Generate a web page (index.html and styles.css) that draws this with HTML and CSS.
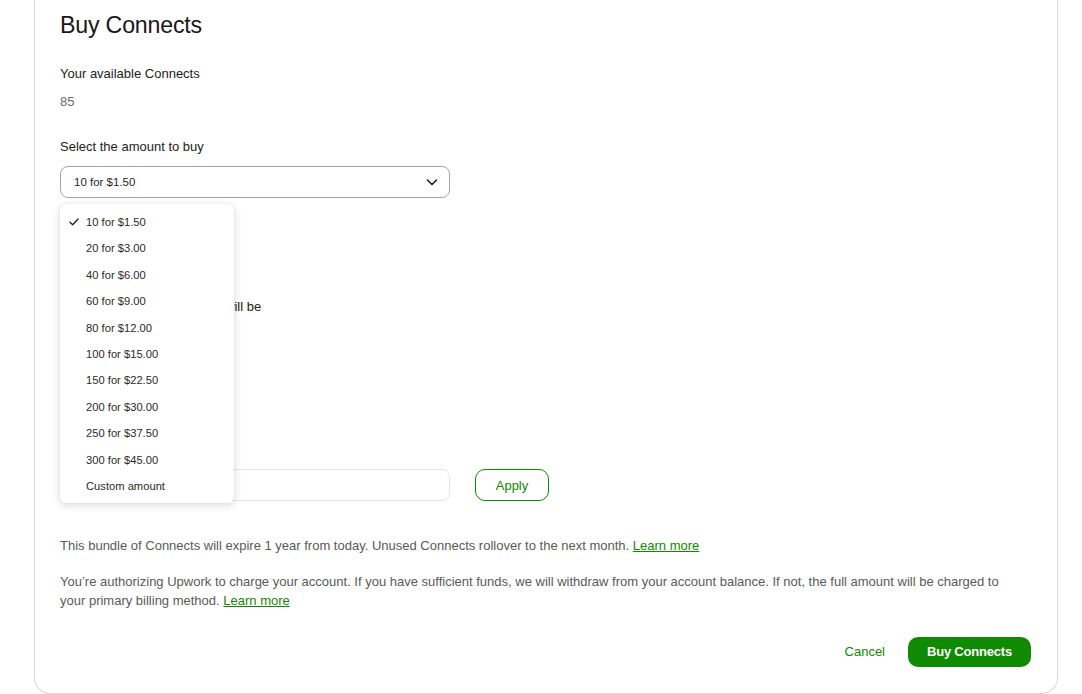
FILE: index.html
```html
<!DOCTYPE html>
<html lang="en">
<head>
<meta charset="utf-8">
<title>Buy Connects</title>
<link rel="stylesheet" href="styles.css">
</head>
<body>
<div class="card">
  <h1 class="title">Buy Connects</h1>
  <div class="label first">Your available Connects</div>
  <div class="value">85</div>
  <div class="label select-label">Select the amount to buy</div>
  <div class="select-wrap">
    <div class="select">
      <span>10 for $1.50</span>
      <svg class="chevron" width="14" height="14" viewBox="0 0 14 14"><path d="M2.5 5 L7 9.5 L11.5 5" fill="none" stroke="#1f1f1f" stroke-width="1.6" stroke-linecap="round" stroke-linejoin="round"/></svg>
    </div>
    <ul class="menu">
      <li class="selected"><svg class="check" width="10" height="10" viewBox="0 0 10 10"><path d="M1 5.2 L3.7 7.8 L9 2" fill="none" stroke="#1f1f1f" stroke-width="1.3" stroke-linecap="round" stroke-linejoin="round"/></svg>10 for $1.50</li>
      <li>20 for $3.00</li>
      <li>40 for $6.00</li>
      <li>60 for $9.00</li>
      <li>80 for $12.00</li>
      <li>100 for $15.00</li>
      <li>150 for $22.50</li>
      <li>200 for $30.00</li>
      <li>250 for $37.50</li>
      <li>300 for $45.00</li>
      <li>Custom amount</li>
    </ul>
  </div>
  <div class="label balance-label">Your new Connects balance will be</div>
  <div class="promo-row">
    <div class="input"></div>
    <button class="btn-outline">Apply</button>
  </div>
  <p class="note first-note">This bundle of Connects will expire 1 year from today. Unused Connects rollover to the next month. <a href="#">Learn more</a></p>
  <p class="note second-note">You’re authorizing Upwork to charge your account. If you have sufficient funds, we will withdraw from your account balance. If not, the full amount will be charged to your primary billing method. <a href="#">Learn more</a></p>
  <div class="actions">
    <button class="btn-link">Cancel</button>
    <button class="btn-primary">Buy Connects</button>
  </div>
</div>
</body>
</html>
```
FILE: styles.css
```css
* { box-sizing: border-box; }
html, body { margin: 0; padding: 0; background: #ffffff; }
body {
  font-family: "Liberation Sans", Arial, sans-serif;
  color: #1f1f1f;
  font-size: 13px;
}
.card {
  margin-left: 34px;
  width: 1024px;
  height: 694px;
  border: 1px solid #d9d9d9;
  border-top: none;
  border-radius: 0 0 16px 16px;
  padding: 9px 26px 0 25px;
}
.title {
  margin: 0;
  font-size: 23.2px;
  line-height: 32px;
  font-weight: 400;
  color: #181818;
  letter-spacing: -0.2px;
}
.label {
  font-size: 13px;
  line-height: 20px;
  color: #222;
}
.label.first { margin-top: 23px; }
.value {
  margin-top: 8px;
  line-height: 20px;
  color: #6b6b6b;
}
.select-label { margin-top: 25px; }
.select-wrap { position: relative; margin-top: 9px; width: 390px; }
.select {
  height: 32px;
  border: 1px solid #a5a5a5;
  border-radius: 8px;
  display: flex;
  align-items: center;
  justify-content: space-between;
  padding: 0 10px 0 13px;
  font-size: 11.5px;
  color: #1f1f1f;
}
.chevron { display: block; }
.menu {
  position: absolute;
  top: 38px;
  left: 0;
  width: 174px;
  margin: 0;
  padding: 5px 0 4px;
  list-style: none;
  background: #fff;
  border-radius: 6px;
  box-shadow: 0 2px 8px rgba(0,0,0,0.16), 0 0 1px rgba(0,0,0,0.12);
  z-index: 5;
}
.menu li {
  height: 26.4px;
  line-height: 26.4px;
  padding-left: 26px;
  font-size: 11.2px;
  color: #2a2a2a;
  position: relative;
}
.check { position: absolute; left: 9px; top: 8px; }
.balance-label { margin-top: 99px; }
.promo-row { margin-top: 152px; display: flex; gap: 25px; align-items: center; }
.input {
  width: 390px;
  height: 32px;
  border: 1px solid #e4e4e4;
  border-radius: 8px;
}
.btn-outline {
  width: 74px;
  height: 32px;
  border: 1px solid #108a00;
  border-radius: 10px;
  background: #fff;
  color: #108a00;
  font-family: inherit;
  font-size: 13px;
}
.note {
  margin: 0;
  font-size: 13px;
  line-height: 19px;
  color: #5a5a5a;
}
.note a { color: #108a00; text-decoration: underline; }
.first-note { margin-top: 35px; }
.second-note { margin-top: 17px; max-width: 960px; }
.actions {
  margin-top: 26.5px;
  display: flex;
  justify-content: flex-end;
  align-items: center;
}
.btn-link {
  border: none;
  background: none;
  color: #108a00;
  font-family: inherit;
  font-size: 13px;
  padding: 0;
  margin-right: 23px;
}
.btn-primary {
  width: 123px;
  height: 30px;
  border: none;
  border-radius: 10px;
  background: #108a00;
  color: #fff;
  font-family: inherit;
  font-size: 13px;
  font-weight: 600;
  letter-spacing: -0.2px;
}
```
